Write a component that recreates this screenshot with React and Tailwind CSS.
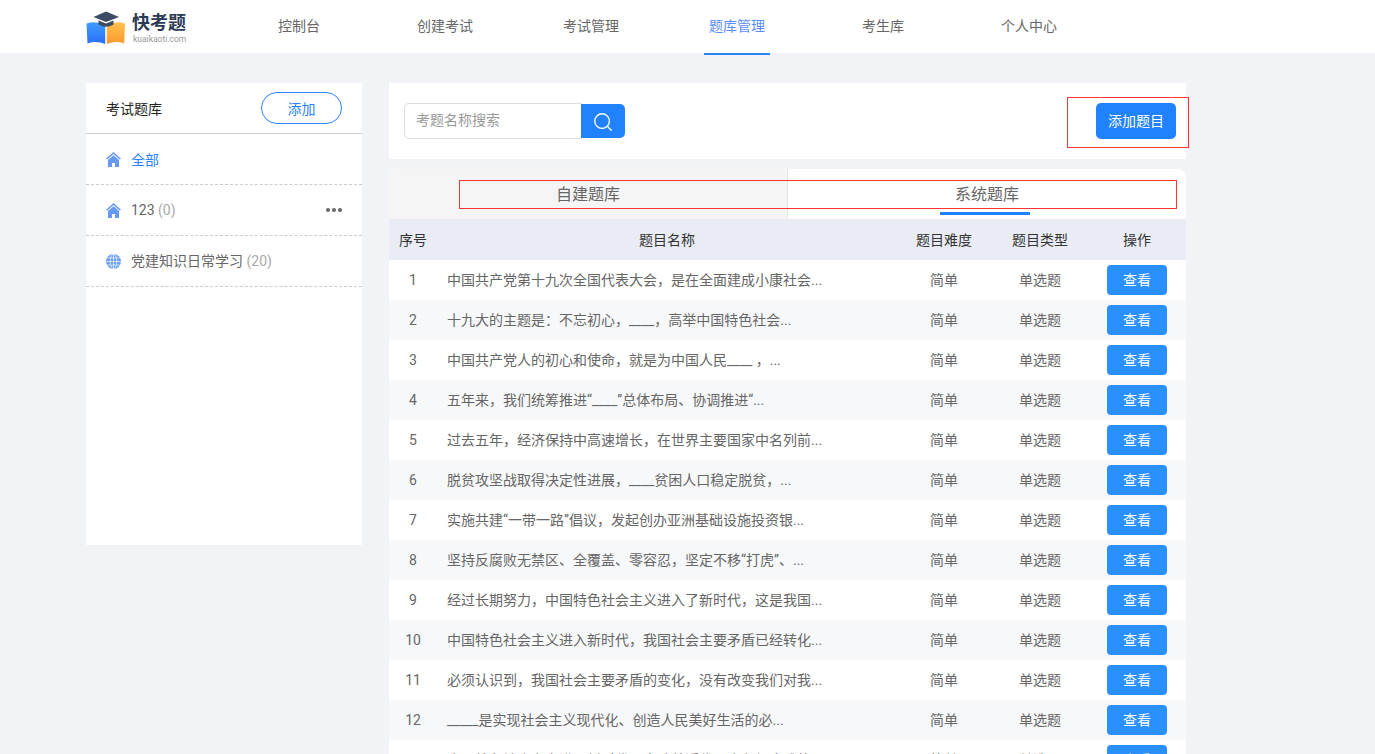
import React from 'react';
import { Search } from 'lucide-react';

const nav = ['控制台', '创建考试', '考试管理', '题库管理', '考生库', '个人中心'];
const rows = [
  '中国共产党第十九次全国代表大会，是在全面建成小康社会...',
  '十九大的主题是：不忘初心，____，高举中国特色社会...',
  '中国共产党人的初心和使命，就是为中国人民____ ，...',
  '五年来，我们统筹推进“____”总体布局、协调推进“...',
  '过去五年，经济保持中高速增长，在世界主要国家中名列前...',
  '脱贫攻坚战取得决定性进展，____贫困人口稳定脱贫，...',
  '实施共建“一带一路”倡议，发起创办亚洲基础设施投资银...',
  '坚持反腐败无禁区、全覆盖、零容忍，坚定不移“打虎”、...',
  '经过长期努力，中国特色社会主义进入了新时代，这是我国...',
  '中国特色社会主义进入新时代，我国社会主要矛盾已经转化...',
  '必须认识到，我国社会主要矛盾的变化，没有改变我们对我...',
  '_____是实现社会主义现代化、创造人民美好生活的必...',
  '中国特色社会主义进入新时代，意味着近代以来久经磨难的...',
];

function Logo() {
  return (
    <svg width="40" height="34" viewBox="0 0 40 34" className="mt-[2px] shrink-0">
      <defs>
        <linearGradient id="bl" x1="0" y1="0" x2="0" y2="1"><stop offset="0" stopColor="#3f9bff" /><stop offset="1" stopColor="#2a6ff5" /></linearGradient>
        <linearGradient id="or" x1="0" y1="0" x2="0" y2="1"><stop offset="0" stopColor="#ffc04d" /><stop offset="1" stopColor="#fb9a2e" /></linearGradient>
      </defs>
      <path d="M0.5 12.5 Q10 9.5 19.2 14 L19.2 33 Q10 29.5 1.5 32.5 Z" fill="url(#bl)" />
      <path d="M20.8 14 Q30 9.5 39 12.5 L38.2 32.5 Q30 29.5 20.8 33 Z" fill="url(#or)" />
      <path d="M20 0.5 L33 6 L20 11 L7.5 6 Z" fill="#3c4a63" />
      <path d="M12.5 9.5 L20 12.5 L27.5 9.5 L27.5 13.5 Q20 18 12.5 13.5 Z" fill="#3c4a63" />
    </svg>
  );
}

function House() {
  return (
    <svg width="15" height="15" viewBox="0 0 15 15" className="shrink-0">
      <path d="M7.5 0 L15 6.8 L13.6 7.4 L7.5 2 L1.4 7.4 L0 6.8 Z" fill="#6699f5" />
      <path d="M2 8 L7.5 3.2 L13 8 L13 15 L9 15 L9 11 L6 11 L6 15 L2 15 Z" fill="#6699f5" />
    </svg>
  );
}

function Globe() {
  return (
    <svg width="15" height="15" viewBox="0 0 16 16" className="shrink-0">
      <circle cx="8" cy="8" r="8" fill="#6b9ef5" />
      <g stroke="#fff" strokeWidth="0.7" fill="none">
        <ellipse cx="8" cy="8" rx="3.4" ry="8" />
        <path d="M8 0 V16 M0 8 H16 M1.4 4.2 H14.6 M1.4 11.8 H14.6" />
      </g>
    </svg>
  );
}

export default function App() {
  return (
    <div className="h-[754px] overflow-hidden bg-[#f1f3f7] font-['Roboto','Noto_Sans_CJK_SC',sans-serif] text-[14px] text-[#666]">
      <header className="flex h-[53px] bg-white">
        <div className="ml-[86px] flex w-[140px] shrink-0 items-center">
          <Logo />
          <div className="mt-[3px] ml-[6px] flex flex-col">
            <span className="text-[18px] leading-[21px] font-bold text-[#2d3a55]">快考题</span>
            <span className="mt-[1px] ml-[1px] text-[8.5px] leading-[10px] text-[#999]">kuaikaoti.com</span>
          </div>
        </div>
        {nav.map((n, i) => (
          <div key={n} className="flex w-[146px] justify-center">
            <div className={`flex h-[55px] w-[66px] items-center justify-center border-b-2 pb-[1px] whitespace-nowrap ${i === 3 ? 'border-[#2a82ff] text-[#5a8dff]' : 'border-transparent text-[#666]'}`}>{n}</div>
          </div>
        ))}
      </header>

      <main className="relative mt-[30px] ml-[86px] flex items-start gap-[27px]">
        <aside className="h-[462px] w-[276px] shrink-0 bg-white">
          <div className="flex h-[51px] items-center justify-between border-b border-[#ccc] px-[20px]">
            <span className="pt-[2px] text-[14px] text-[#222]">考试题库</span>
            <button className="h-[32px] w-[81px] rounded-full border border-[#2a82ff] pt-[2px] text-[14px] text-[#2a82ff]">添加</button>
          </div>
          <div className="flex h-[51px] items-center gap-[10px] border-b border-dashed border-[#ccc] pl-[20px] text-[#2a82ff]">
            <House /><span className="pt-[2px]">全部</span>
          </div>
          <div className="flex h-[51px] items-center gap-[10px] border-b border-dashed border-[#ccc] px-[20px]">
            <House />
            <span>123 <span className="text-[#aaa]">(0)</span></span>
            <span className="ml-auto flex gap-[2px]">
              <i className="size-[4px] rounded-full bg-[#666]" /><i className="size-[4px] rounded-full bg-[#666]" /><i className="size-[4px] rounded-full bg-[#666]" />
            </span>
          </div>
          <div className="flex h-[51px] items-center gap-[10px] border-b border-dashed border-[#ccc] pl-[20px]">
            <Globe /><span>党建知识日常学习 <span className="text-[#aaa]">(20)</span></span>
          </div>
        </aside>

        <section className="w-[797px] shrink-0">
          <div className="flex h-[76px] items-center justify-between bg-white pr-[10px] pl-[15px]">
            <div className="flex items-center">
              <div className="flex h-[36px] w-[178px] items-center rounded-l-[5px] border border-[#ddd] pb-[2px] pl-[11px] text-[#999]">考题名称搜索</div>
              <div className="-ml-px flex h-[34px] w-[44px] items-center justify-center rounded-r-[5px] bg-[#2082ff] pt-[2px]">
                <Search size={22} strokeWidth={1.5} color="#fff" />
              </div>
            </div>
            <button className="h-[36px] w-[80px] rounded-[5px] bg-[#2082ff] text-[14px] text-white">添加题目</button>
          </div>

          <div className="mt-[10px] flex h-[50px] overflow-hidden rounded-t-[8px] bg-white text-[16px]">
            <div className="flex w-[399px] items-center justify-center border-r border-[#e5e5e5] bg-[#f5f5f5] pt-[1px]">自建题库</div>
            <div className="relative flex flex-1 items-center justify-center pt-[1px]">
              系统题库
              <span className="absolute bottom-[4px] left-[152px] h-[3px] w-[90px] bg-[#2082ff]" />
            </div>
          </div>

          <div className="grid h-[41px] grid-cols-[48px_460px_94px_98px_96px] items-center bg-[#e9ecf4] pt-[1px] text-center text-[14px] text-[#333]">
            <span>序号</span><span>题目名称</span><span>题目难度</span><span>题目类型</span><span>操作</span>
          </div>

          {rows.map((r, i) => (
            <div key={i} className={`grid h-[40px] grid-cols-[48px_460px_94px_98px_96px] items-center text-center ${i % 2 ? 'bg-[#f7f8fa]' : 'bg-white'}`}>
              <span>{i + 1}</span>
              <span className="pl-[10px] text-left whitespace-nowrap">{r}</span>
              <span>简单</span>
              <span>单选题</span>
              <span className="flex justify-center">
                <button className="h-[30px] w-[60px] rounded-[4px] bg-[#2b90ff] text-[14px] text-white">查看</button>
              </span>
            </div>
          ))}
        </section>

        <div className="pointer-events-none absolute top-[14px] left-[981px] h-[51px] w-[122px] border border-[#f33]" />
        <div className="pointer-events-none absolute top-[97px] left-[373px] h-[29px] w-[718px] border border-[#f33]" />
      </main>
    </div>
  );
}
